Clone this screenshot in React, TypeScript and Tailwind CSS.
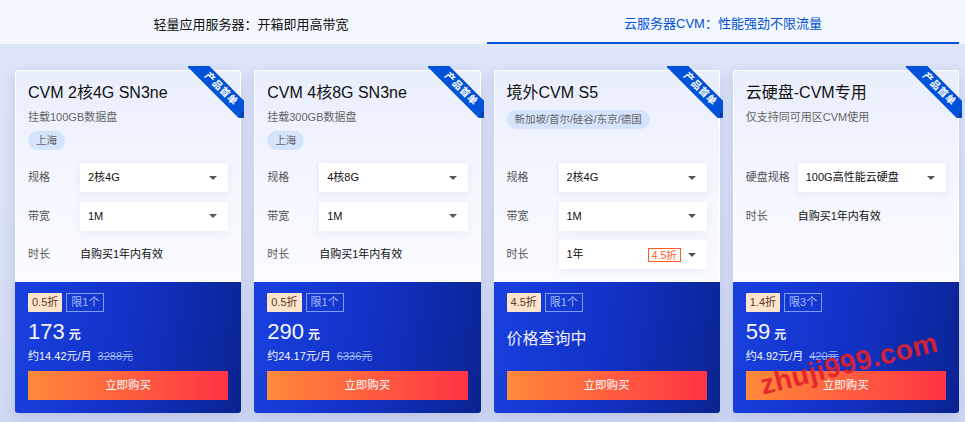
import React from "react";

type Row =
  | { kind: "select"; label: string; value: string; badge?: string }
  | { kind: "text"; label: string; value: string };

type Card = {
  title: string;
  sub?: string;
  tag?: string;
  rows: Row[];
  discount: string;
  limit: string;
  price?: string;
  monthly?: string;
  orig?: string;
};

const cards: Card[] = [
  {
    title: "CVM 2核4G SN3ne",
    sub: "挂载100GB数据盘",
    tag: "上海",
    rows: [
      { kind: "select", label: "规格", value: "2核4G" },
      { kind: "select", label: "带宽", value: "1M" },
      { kind: "text", label: "时长", value: "自购买1年内有效" },
    ],
    discount: "0.5折",
    limit: "限1个",
    price: "173",
    monthly: "约14.42元/月",
    orig: "3288元",
  },
  {
    title: "CVM 4核8G SN3ne",
    sub: "挂载300GB数据盘",
    tag: "上海",
    rows: [
      { kind: "select", label: "规格", value: "4核8G" },
      { kind: "select", label: "带宽", value: "1M" },
      { kind: "text", label: "时长", value: "自购买1年内有效" },
    ],
    discount: "0.5折",
    limit: "限1个",
    price: "290",
    monthly: "约24.17元/月",
    orig: "6336元",
  },
  {
    title: "境外CVM S5",
    tag: "新加坡/首尔/硅谷/东京/德国",
    rows: [
      { kind: "select", label: "规格", value: "2核4G" },
      { kind: "select", label: "带宽", value: "1M" },
      { kind: "select", label: "时长", value: "1年", badge: "4.5折" },
    ],
    discount: "4.5折",
    limit: "限1个",
  },
  {
    title: "云硬盘-CVM专用",
    sub: "仅支持同可用区CVM使用",
    rows: [
      { kind: "select", label: "硬盘规格", value: "100G高性能云硬盘" },
      { kind: "text", label: "时长", value: "自购买1年内有效" },
    ],
    discount: "1.4折",
    limit: "限3个",
    price: "59",
    monthly: "约4.92元/月",
    orig: "420元",
  },
];

function Caret() {
  return (
    <svg width="8" height="4" viewBox="0 0 8 4" className="shrink-0">
      <path d="M0 0h8L4 4z" fill="#555" />
    </svg>
  );
}

function Ribbon() {
  return (
    <div className="absolute top-[-4px] right-[-3px] w-[56px] h-[52px] overflow-hidden pointer-events-none">
      <div className="absolute left-[-17px] top-[15px] w-[100px] h-[16px] rotate-45 bg-[#0052d9] text-white text-[10px] leading-[16px] font-bold text-center tracking-[0.5px]">
        产品首单
      </div>
      <div className="absolute right-0 bottom-0 w-0 h-0 border-t-[5px] border-t-[#0a2f86] border-r-[3px] border-r-transparent" />
    </div>
  );
}

function CardView({ c }: { c: Card }) {
  return (
    <div className="relative rounded-[3px] shadow-[0_4px_14px_rgba(40,70,170,0.16)]">
      <Ribbon />
      <div className="h-[212px] rounded-t-[3px] border border-white border-b-0 bg-[linear-gradient(180deg,#e9eefc_0%,#f4f7fe_55%,#fafbff_100%)] px-[12px]">
        <div className="h-[92px] pt-[11px]">
          <div className="text-[16px] leading-[22px] text-[#111]">{c.title}</div>
          {c.sub && (
            <div className="mt-[5px] text-[11px] leading-[16px] text-[#666]">{c.sub}</div>
          )}
          {c.tag && (
            <div className="mt-[6px] flex">
              <span className="h-[19px] rounded-full bg-[#d6e3fc] px-[8px] text-[10.5px] leading-[19px] text-[#666]">
                {c.tag}
              </span>
            </div>
          )}
        </div>
        <div className="flex flex-col gap-[9.5px]">
          {c.rows.map((r, i) => (
            <div key={i} className="flex h-[29px] items-center">
              <div className="w-[52px] shrink-0 text-[11px] text-[#555]">{r.label}</div>
              {r.kind === "select" ? (
                <div className="flex h-[29px] flex-1 items-center bg-white pl-[8px] pr-[11px] shadow-[0_2px_8px_rgba(30,60,160,0.08)]">
                  <span className="flex-1 text-[11px] text-[#111]">{r.value}</span>
                  {r.badge && (
                    <span className="mr-[7px] h-[14px] border border-[#ff5a1f] px-[3px] text-[10.5px] leading-[12px] text-[#ff5a1f]">
                      {r.badge}
                    </span>
                  )}
                  <Caret />
                </div>
              ) : (
                <div className="text-[11px] text-[#111]">{r.value}</div>
              )}
            </div>
          ))}
        </div>
      </div>
      <div className="h-[131px] rounded-b-[3px] bg-[linear-gradient(100deg,#1940e0_0%,#1232c6_50%,#0a2390_100%)] px-[13px] pt-[11px]">
        <div className="flex gap-[4px]">
          <span className="h-[19px] rounded-[1px] bg-[#ffe4cc] px-[4px] text-[11px] leading-[19px] text-[#5a3b28]">
            {c.discount}
          </span>
          <span className="h-[19px] border border-[#7f9cf5] px-[4px] text-[11px] leading-[17px] text-[#a7bdff]">
            {c.limit}
          </span>
        </div>
        {c.price ? (
          <div className="mt-[8px] h-[41px]">
            <div className="flex items-baseline leading-[24px] text-[#f4f6ff]">
              <span className="text-[22px]">{c.price}</span>
              <span className="ml-[4px] text-[12px] font-bold">元</span>
            </div>
            <div className="mt-[1px] flex gap-[6px] text-[11px] leading-[16px]">
              <span className="text-[#f4f6ff]">{c.monthly}</span>
              <span className="text-[#9fb3f5] line-through">{c.orig}</span>
            </div>
          </div>
        ) : (
          <div className="mt-[8px] flex h-[41px] items-center pb-[4px] text-[16px] text-[#eef0ff]">
            价格查询中
          </div>
        )}
        <div className="mt-[10px] flex h-[29px] items-center justify-center bg-[linear-gradient(90deg,#ff8a3a,#ff3344)] text-[11.5px] text-white">
          立即购买
        </div>
      </div>
    </div>
  );
}

export default function App() {
  return (
    <div
      className="relative h-[422px] w-[965px] overflow-hidden bg-[linear-gradient(180deg,#dfe6f9_0%,#d8e0f6_60%,#d0d9f3_100%)]"
      style={{ fontFamily: '"Liberation Sans", "Noto Sans CJK SC", sans-serif' }}
    >
      <div className="grid h-[44px] grid-cols-2 bg-[#f4f7fe] pl-[15px] pr-[6px]">
        <div className="flex items-center justify-center pt-[6px] text-[13px] text-[#111]">
          轻量应用服务器：开箱即用高带宽
        </div>
        <div className="flex items-center justify-center border-b-[2px] border-[#0052d9] pt-[6px] text-[13px] text-[#0052d9]">
          云服务器CVM：性能强劲不限流量
        </div>
      </div>
      <div className="grid grid-cols-4 gap-[13px] pl-[15px] pr-[6px] pt-[26px]">
        {cards.map((c, i) => (
          <CardView key={i} c={c} />
        ))}
      </div>
      <div
        className="pointer-events-none absolute left-[749px] top-[348px] w-[200px] rotate-[-14deg] text-center text-[28px] font-bold leading-[32px] tracking-[0.5px] text-[#e3202c] opacity-90"
        style={{ fontFamily: '"Liberation Sans", sans-serif' }}
      >
        zhuji999.com
      </div>
    </div>
  );
}
